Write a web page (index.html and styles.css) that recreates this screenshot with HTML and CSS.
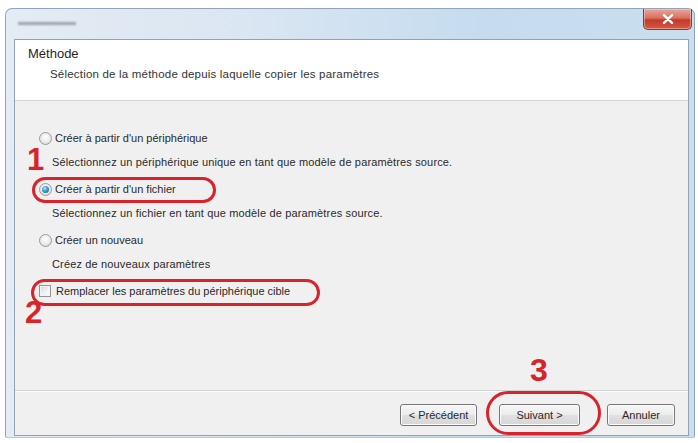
FILE: index.html
```html
<!DOCTYPE html>
<html lang="fr">
<head>
<meta charset="utf-8">
<title>Méthode</title>
<link rel="stylesheet" href="styles.css">
</head>
<body>
<div class="window">
  <div class="titlebar">
    <span class="title-blur"></span>
    <button class="close" type="button" aria-label="Fermer">
      <svg width="12" height="10" viewBox="0 0 12 10"><path d="M2 1.2 L10 8.8 M10 1.2 L2 8.8" stroke="#fff" stroke-width="2.4" stroke-linecap="round"/></svg>
    </button>
  </div>
  <div class="client">
    <header class="header">
      <h1 class="h-title">Méthode</h1>
      <p class="h-sub">Sélection de la méthode depuis laquelle copier les paramètres</p>
    </header>
    <main class="content">
      <label class="option first"><span class="radio"></span>Créer à partir d'un périphérique</label>
      <p class="desc">Sélectionnez un périphérique unique en tant que modèle de paramètres source.</p>
      <label class="option"><span class="radio on"></span>Créer à partir d'un fichier</label>
      <p class="desc">Sélectionnez un fichier en tant que modèle de paramètres source.</p>
      <label class="option"><span class="radio"></span>Créer un nouveau</label>
      <p class="desc">Créez de nouveaux paramètres</p>
      <label class="check"><span class="box"></span>Remplacer les paramètres du périphérique cible</label>
    </main>
    <footer class="footer">
      <button class="btn btn-prev" type="button">&lt; Précédent</button>
      <button class="btn btn-next" type="button">Suivant &gt;</button>
      <button class="btn btn-cancel" type="button">Annuler</button>
    </footer>
  </div>
  <span class="oval oval-1"></span>
  <span class="oval oval-2"></span>
  <span class="oval oval-3"></span>
  <span class="num num-1">1</span>
  <span class="num num-2">2</span>
  <span class="num num-3">3</span>
</div>
</body>
</html>
```

FILE: styles.css
```css
html, body {
  margin: 0;
  padding: 0;
  background: #ffffff;
}

body {
  font-family: "Liberation Sans", Arial, sans-serif;
  font-size: 11px;
  color: #222;
}

.window {
  position: relative;
  margin: 8px 0 0 5px;
  width: 690px;
  height: 430px;
  box-sizing: border-box;
  border: 1px solid #93a4b8;
  border-bottom-color: #b9c8d8;
  border-radius: 7px 7px 2px 2px;
  background: linear-gradient(to right, #e4ebf3 0%, #dae6f2 35%, #c5dbf0 70%, #cadef1 100%);
  display: flex;
  flex-direction: column;
}

.titlebar {
  height: 30px;
  display: flex;
  justify-content: space-between;
  align-items: flex-start;
  padding: 0 2px 0 12px;
  flex: none;
}

.title-blur {
  display: block;
  margin-top: 13px;
  width: 58px;
  height: 3px;
  background: #8c97a5;
  filter: blur(1px);
  opacity: 0.85;
}

.close {
  width: 49px;
  height: 21px;
  padding: 0;
  margin: 0;
  border: 1px solid #8a3a30;
  border-top: none;
  border-radius: 0 0 5px 5px;
  background: linear-gradient(#e9a699 0%, #d9705e 45%, #c4392a 55%, #d45a43 100%);
  box-shadow: inset 0 0 0 1px rgba(255, 220, 210, 0.45);
  display: flex;
  align-items: center;
  justify-content: center;
}

.client {
  margin: 0 5px 1px 8px;
  flex: 1;
  display: flex;
  flex-direction: column;
  border: 1px solid #8ea2ba;
  background: #f0f0f0;
}

.header {
  background: #ffffff;
  height: 61px;
  box-sizing: border-box;
  padding: 6px 0 0 13px;
  border-bottom: 1px solid #d6d6d6;
}

.h-title {
  margin: 0;
  font-size: 13px;
  font-weight: normal;
  line-height: 16px;
  color: #1f1f1f;
}

.h-sub {
  margin: 4px 0 0 22px;
  line-height: 16px;
  font-size: 11.5px;
  letter-spacing: 0.2px;
  color: #333;
}

.content {
  flex: 1;
  display: flex;
  flex-direction: column;
  align-items: flex-start;
  padding: 29px 0 0 0;
  border-bottom: 1px solid #d2d2d2;
  box-shadow: 0 1px 0 #fbfbfb;
}

.option, .check {
  display: flex;
  align-items: center;
  height: 16px;
  line-height: 16px;
  margin-top: 11px;
  color: #2a2a2a;
}

.option.first {
  margin-top: 0;
}

.option {
  padding-left: 24px;
}

.check {
  padding-left: 24px;
}

.radio {
  position: relative;
  width: 13px;
  height: 13px;
  box-sizing: border-box;
  border-radius: 50%;
  border: 1px solid #9a9a9a;
  background: radial-gradient(circle at 50% 40%, #ffffff 0%, #e8e8e8 60%, #cfcfcf 100%);
  margin-right: 3px;
  flex: none;
}

.radio.on::after {
  content: "";
  position: absolute;
  left: 2px;
  top: 2px;
  width: 7px;
  height: 7px;
  border-radius: 50%;
  background: radial-gradient(circle at 40% 35%, #b7ecf8 0%, #3d98c8 45%, #1a5a85 100%);
}

.box {
  width: 12px;
  height: 12px;
  box-sizing: border-box;
  border: 1px solid #949494;
  background: linear-gradient(135deg, #d6d6d6 0%, #f1f1f1 55%, #ffffff 100%);
  box-shadow: inset 0 0 0 1px #f4f4f4;
  margin-right: 5px;
  flex: none;
}

.desc {
  margin: 8px 0 0 37px;
  line-height: 16px;
  letter-spacing: 0.15px;
  color: #2a2a2a;
}

.footer {
  height: 44px;
  display: flex;
  align-items: flex-start;
  justify-content: flex-end;
  padding: 13px 13px 0 0;
  box-sizing: border-box;
}

.btn {
  height: 22px;
  padding: 0;
  border: 1px solid #767676;
  border-radius: 3px;
  background: linear-gradient(#f6f6f6 0%, #ececec 50%, #e0e0e0 52%, #d6d6d6 100%);
  box-shadow: inset 0 0 0 1px #fbfbfb;
  font-family: "Liberation Sans", Arial, sans-serif;
  font-size: 11px;
  color: #2a2a2a;
}

.btn-prev { width: 77px; }
.btn-next { width: 81px; margin-left: 22px; }
.btn-cancel { width: 68px; margin-left: 27px; }

.oval {
  position: absolute;
  box-sizing: border-box;
  border: 3px solid #d9232b;
  border-radius: 16px;
}

.oval-1 { left: 26px; top: 168px; width: 184px; height: 26px; }
.oval-2 { left: 25px; top: 270px; width: 289px; height: 27px; }
.oval-3 { left: 480px; top: 382px; width: 115px; height: 44px; border-radius: 22px; }

.num {
  position: absolute;
  font-family: "Liberation Sans", Arial, sans-serif;
  font-weight: bold;
  font-size: 31px;
  line-height: 31px;
  color: #d9232b;
}

.num-1 { left: 21px; top: 135px; }
.num-2 { left: 19px; top: 288px; }
.num-3 { left: 524px; top: 346px; font-size: 32px; }
```
